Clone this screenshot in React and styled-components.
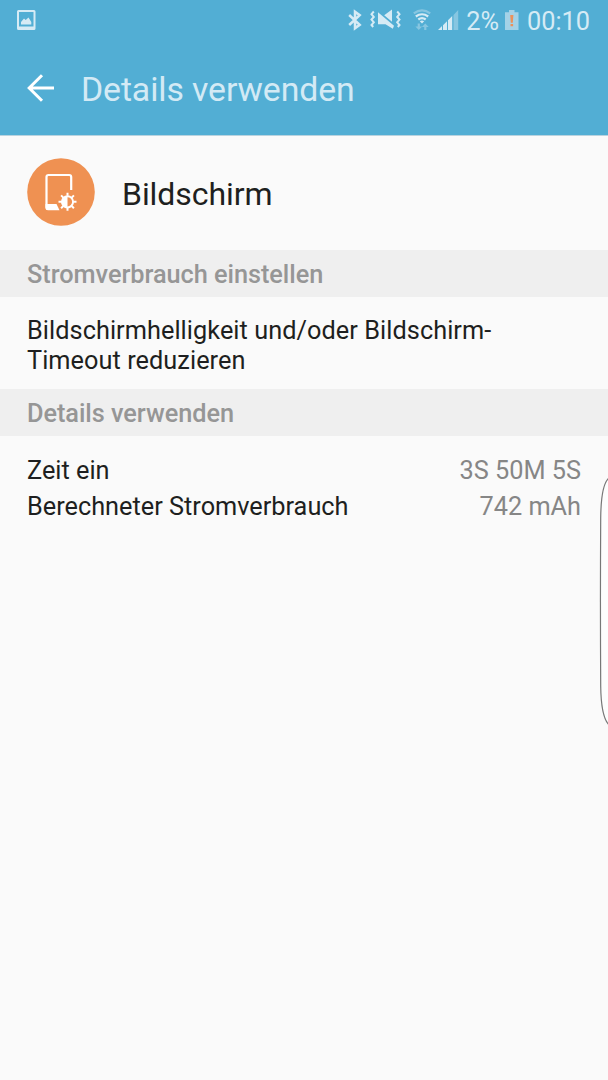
import React from 'react';
import styled, { createGlobalStyle } from 'styled-components';

const GlobalStyle = createGlobalStyle`
  * {
    box-sizing: border-box;
  }

  body {
    margin: 0;
    background: #fafafa;
    font-family: Roboto, 'Noto Sans', sans-serif;
  }
`;

const Screen = styled.div`
  position: relative;
  width: 608px;
  height: 1080px;
  overflow: hidden;
  background: #fafafa;
  color: #1e1f20;
`;

const TopArea = styled.header`
  height: 136px;
  background: #52aed4;
  border-bottom: 1px solid #b9d3df;
`;

const StatusBar = styled.div`
  display: flex;
  justify-content: space-between;
  height: 40px;
  padding: 0 18px 0 17px;
  color: #d6ebf5;
`;

const StatusIcons = styled.div`
  display: flex;
  align-items: center;
`;

const StatusIcon = styled.svg`
  display: block;
  width: ${props => props.$width}px;
  height: 40px;
  margin-left: ${props => props.$gap || 0}px;
`;

const StatusText = styled.span`
  margin-left: ${props => props.$gap}px;
  padding-top: 3px;
  font-size: 25.3px;
  line-height: 37px;
  white-space: nowrap;
`;

const AppBar = styled.div`
  display: flex;
  align-items: center;
  height: 96px;
  padding: 3px 27px 0;
`;

const BackIcon = styled.svg`
  width: 28px;
  height: 28px;
  margin-bottom: 3px;
`;

const Title = styled.h1`
  margin: 0 0 0 26px;
  color: #d3eaf5;
  font-size: 33.8px;
  font-weight: 400;
  letter-spacing: -0.1px;
  line-height: 40px;
`;

const AppRow = styled.div`
  display: flex;
  align-items: center;
  height: 114px;
  padding: 0 27px 2px;
`;

const AppIcon = styled.svg`
  width: 68px;
  height: 68px;
`;

const AppName = styled.div`
  margin: 3px 0 0 27px;
  font-size: 32px;
  letter-spacing: -0.05px;
  line-height: 38px;
`;

const SectionHeader = styled.h2`
  height: 47px;
  margin: 0;
  padding: 1px 27px 0;
  background: #efefef;
  color: #969696;
  font-size: 25.3px;
  font-weight: 500;
  letter-spacing: -0.04px;
  line-height: 47px;
`;

const Hint = styled.p`
  height: 92px;
  margin: 0;
  padding: 19px 27px 0;
  font-size: 25.3px;
  letter-spacing: 0.05px;
  line-height: 30px;
`;

const Details = styled.dl`
  margin: 0;
  padding: 17px 27px 0;
`;

const DetailRow = styled.div`
  display: flex;
  justify-content: space-between;
  height: 36px;
  font-size: 25.3px;
  line-height: 36px;
`;

const Label = styled.dt`
  margin: 0;
`;

const Value = styled.dd`
  margin: 0;
  color: #868686;
`;

const EdgeHandle = styled.svg`
  position: absolute;
  top: 475px;
  right: 0;
  width: 10px;
  height: 254px;
`;

const details = [
  { label: 'Zeit ein', value: '3S 50M 5S' },
  { label: 'Berechneter Stromverbrauch', value: '742 mAh' },
];

const PictureIcon = () => (
  <StatusIcon $width={19} viewBox="0 0 19 40">
    <path
      fill="currentColor"
      fillRule="evenodd"
      d="M1.500 10h15.500a1.500 1.500 0 0 1 1.500 1.500v17a1.500 1.500 0 0 1-1.500 1.500h-15.500a1.500 1.500 0 0 1-1.500-1.500v-17a1.500 1.500 0 0 1 1.500-1.500zM2 12v14.500h14.500v-14.500z"
    />
    <path fill="currentColor" d="M4 24.500v-2.500l3-3.500 1.700 1.500 2.800-2.500 2.800 4.500v2.500z" />
  </StatusIcon>
);

const BluetoothIcon = () => (
  <StatusIcon $width={14} viewBox="0 0 14 40">
    <path
      fill="none"
      stroke="currentColor"
      strokeWidth="2.500"
      d="M1.200 15l10.500 9.800-4.700 3.400v-16.400l4.700 3.400-10.500 9.800"
    />
  </StatusIcon>
);

const MuteIcon = () => (
  <StatusIcon $width={31} $gap={8} viewBox="0 0 31 40">
    <g fill="none" stroke="currentColor" strokeWidth="2">
      <path d="M3.800 11.500l-2.300 2.700 2.300 2.700-2.300 2.700 2.300 2.700-2.300 2.700 1.700 2" />
      <path d="M27.200 11.500l2.300 2.700-2.300 2.700 2.300 2.700-2.300 2.700 2.300 2.700-1.700 2" />
    </g>
    <path fill="currentColor" d="M8 12.200l16 13.600-1.200 3-7.300-4.500h-7.500zM14.200 15.200l7.800-5.700v12.200z" />
  </StatusIcon>
);

const WifiIcon = () => (
  <StatusIcon $width={18} $gap={12} viewBox="0 0 18 40">
    <g fill="none" stroke="currentColor" strokeWidth="2.200">
      <path opacity=".4" d="M.8 13.300q8.200-6 16.400 0" />
      <path d="M2.800 16.500q6.200-4.500 12.400 0" />
      <path d="M5.300 19.500q3.700-2.800 7.400 0" />
    </g>
    <path fill="currentColor" d="M6.800 21.200q2.200-1.500 4.400 0l-2.200 2.300z" />
    <path
      fill="currentColor"
      opacity=".4"
      d="M4.700 23.500h2.200v3h2.300l-3.400 3.500-3.400-3.500h2.300zM11.200 30h2.200v-3h2.300l-3.400-3.500-3.400 3.500h2.300z"
    />
  </StatusIcon>
);

const SignalIcon = () => (
  <StatusIcon $width={21} $gap={7} viewBox="0 0 21 40">
    <path fill="currentColor" d="M0 30l4-4v4zM5 25.200l4-4v8.800h-4zM10 20.200l4.200-4.200v14h-4.200z" />
    <path fill="currentColor" opacity=".4" d="M15.500 15l4.700-5v20h-4.700z" />
  </StatusIcon>
);

const BatteryIcon = () => (
  <StatusIcon $width={14} $gap={6} viewBox="0 0 14 40">
    <path fill="#a4d2e7" d="M4 10h5.500v2.300h4v17.700h-13.500v-17.700h4z" />
    <path fill="#eb915b" d="M5.200 15h3.200l-.6 7.800h-2zM5.500 24h2.600v2.300h-2.600z" />
  </StatusIcon>
);

const ScreenIcon = () => (
  <AppIcon viewBox="0 0 68 68">
    <circle cx="34" cy="34" r="33.800" fill="#ef9152" />
    <path
      fill="none"
      stroke="#fff"
      strokeWidth="2.200"
      d="M44.200 32v-13q0-2-2-2h-20.700q-2 0-2 2v30q0 2 2 2h9"
    />
    <path fill="#fff" d="M18.500 46h11l3 6.200h-11.500q-2.500 0-2.500-2.500z" />
    <circle cx="40.500" cy="43.800" r="5.600" fill="none" stroke="#fff" strokeWidth="2" />
    <path fill="#fff" d="M40.500 38.200a5.600 5.600 0 0 0 0 11.200z" />
    <path
      stroke="#fff"
      strokeWidth="2"
      d="M40.500 34.800v3M40.500 49.800v3M31.500 43.800h3M46.500 43.800h3M34.100 37.400l2.200 2.200M44.700 48l2.200 2.200M34.100 50.200l2.200-2.200M44.700 39.600l2.200-2.200"
    />
  </AppIcon>
);

const App = () => {
  return (
    <>
      <GlobalStyle />
      <Screen>
        <TopArea>
          <StatusBar>
            <StatusIcons>
              <PictureIcon />
            </StatusIcons>
            <StatusIcons>
              <BluetoothIcon />
              <MuteIcon />
              <WifiIcon />
              <SignalIcon />
              <StatusText $gap={7}>2%</StatusText>
              <BatteryIcon />
              <StatusText $gap={8}>00:10</StatusText>
            </StatusIcons>
          </StatusBar>
          <AppBar>
            <BackIcon viewBox="0 0 28 28" fill="none" stroke="#fff" strokeWidth="3">
              <path d="M15 1.200l-12.800 12.800 12.800 12.800M2.500 14h24.500" />
            </BackIcon>
            <Title>Details verwenden</Title>
          </AppBar>
        </TopArea>

        <AppRow>
          <ScreenIcon />
          <AppName>Bildschirm</AppName>
        </AppRow>

        <SectionHeader>Stromverbrauch einstellen</SectionHeader>
        <Hint>Bildschirmhelligkeit und/oder Bildschirm-Timeout reduzieren</Hint>

        <SectionHeader>Details verwenden</SectionHeader>
        <Details>
          {details.map(({ label, value }) => (
            <DetailRow key={label}>
              <Label>{label}</Label>
              <Value>{value}</Value>
            </DetailRow>
          ))}
        </Details>

        <EdgeHandle viewBox="0 0 10 254">
          <path
            fill="#fdfdfd"
            stroke="#777"
            strokeWidth="1.200"
            d="M11 3c-5 4-8 14-8.300 40q-.5 84 0 168c.3 24 3.300 34 8.300 39"
          />
        </EdgeHandle>
      </Screen>
    </>
  );
};

export default App;
